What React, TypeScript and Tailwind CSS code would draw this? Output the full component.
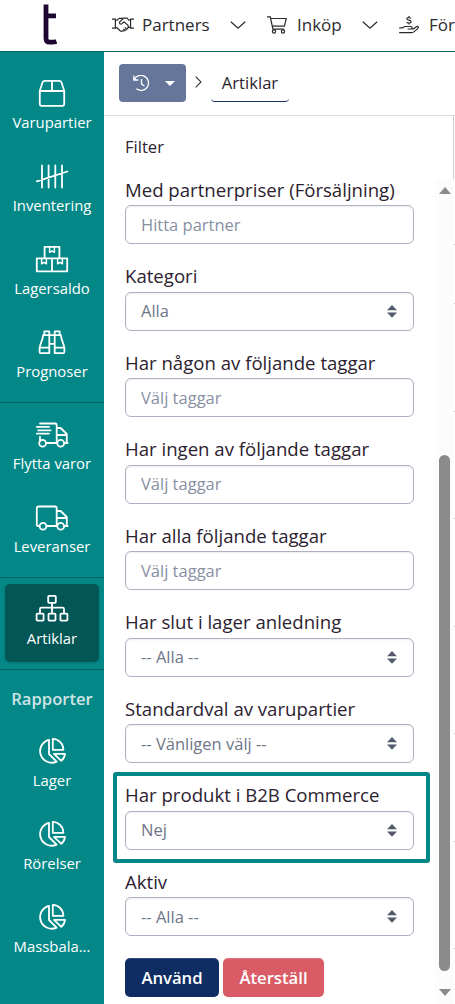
import type { ReactNode } from 'react';

interface SidebarItemProps {
  label: string;
  icon: ReactNode;
  active?: boolean;
}

interface FilterField {
  label: string;
  text: string;
  type: 'input' | 'select';
  highlighted?: boolean;
}

const FIELDS: FilterField[] = [
  { label: 'Med partnerpriser (Försäljning)', text: 'Hitta partner', type: 'input' },
  { label: 'Kategori', text: 'Alla', type: 'select' },
  { label: 'Har någon av följande taggar', text: 'Välj taggar', type: 'input' },
  { label: 'Har ingen av följande taggar', text: 'Välj taggar', type: 'input' },
  { label: 'Har alla följande taggar', text: 'Välj taggar', type: 'input' },
  { label: 'Har slut i lager anledning', text: '-- Alla --', type: 'select' },
  { label: 'Standardval av varupartier', text: '-- Vänligen välj --', type: 'select' },
  { label: 'Har produkt i B2B Commerce', text: 'Nej', type: 'select', highlighted: true },
  { label: 'Aktiv', text: '-- Alla --', type: 'select' },
];

function SideIcon({ children }: { children: ReactNode }) {
  return (
    <svg
      viewBox="0 0 32 32"
      className="h-8 w-8 overflow-visible"
      fill="none"
      stroke="currentColor"
      strokeWidth="1.8"
      strokeLinecap="round"
      strokeLinejoin="round"
    >
      {children}
    </svg>
  );
}

const BoxIcon = () => (
  <SideIcon>
    <path d="M3.8 13.8 6.6 5.2Q7.1 3.8 8.6 3.8H23.4Q24.9 3.8 25.4 5.2L28.2 13.8V27Q28.2 28.8 26.4 28.8H5.6Q3.8 28.8 3.8 27ZM3.8 14H28.2M16 3.8V14" />
  </SideIcon>
);

const TallyIcon = () => (
  <SideIcon>
    <path d="M6 5.5V27.5M12.6 5.5V27.5M19.3 5.5V27.5M26 5.5V27.5M.8 21.3 31.4 11.5" />
  </SideIcon>
);

const BoxesIcon = () => (
  <SideIcon>
    <path d="M8.6 15V3.8H23.4V15M.8 15.3H31.2V28.4H.8ZM16 15.3V28.4" />
    <path
      strokeWidth="1.5"
      d="M13.6 4V9.3L16 7.9 18.4 9.3V4M5.6 15.5V20.8L8 19.4 10.4 20.8V15.5M21.6 15.5V20.8L24 19.4 26.4 20.8V15.5"
    />
  </SideIcon>
);

const BinocularsIcon = () => (
  <SideIcon>
    <path d="M8.3 8.6V5.4H13.3V27.2H4.8Q3.6 27.2 3.6 26V22.5C3.9 17.5 6.9 14.5 7.1 9.2H24.9C25.1 14.5 28.1 17.5 28.4 22.5V26Q28.4 27.2 27.2 27.2H18.7V5.4H23.7V8.6M13.3 17.8H18.7M4 21.6H13.3M18.7 21.6H28" />
  </SideIcon>
);

const TruckFastIcon = () => (
  <SideIcon>
    <path d="M4 6.5H19.2Q20.7 6.5 20.7 8V26M.8 9.9H13M2.2 13.3H14.6M.8 16.6H13M4 19.8V24.2M10 26H21M20.7 11H24.6L30.8 17V26M20.7 18H30.6M28.4 26H31.6" />
    <circle cx="6.6" cy="26.3" r="3.4" />
    <circle cx="24.7" cy="26.3" r="3.4" />
  </SideIcon>
);

const TruckIcon = () => (
  <SideIcon>
    <path d="M3.4 26H2.4Q.8 26 .8 24.4V8.1Q.8 6.5 2.4 6.5H19.1Q20.7 6.5 20.7 8.1V26M10.5 26H21M20.7 11H24.6L30.8 17V26M20.7 18H30.6M28.4 26H31.6" />
    <circle cx="7" cy="26.3" r="3.4" />
    <circle cx="24.7" cy="26.3" r="3.4" />
  </SideIcon>
);

const SitemapIcon = () => (
  <SideIcon>
    <rect x="12.2" y="3.8" width="7.6" height="7" rx=".8" />
    <rect x=".6" y="21.6" width="7" height="7" rx=".8" />
    <rect x="12.5" y="21.6" width="7" height="7" rx=".8" />
    <rect x="24.4" y="21.6" width="7" height="7" rx=".8" />
    <path d="M16 11V21.4M4 21.4V17Q4 15.7 5.3 15.7H26.7Q28 15.7 28 17V21.4" />
  </SideIcon>
);

const PieIcon = () => (
  <SideIcon>
    <path d="M13 5.8A11.6 11.6 0 1 0 20.6 27.6L13 20ZM16.8 4.9V15.8H27.4A11 11 0 0 0 16.8 4.9ZM18 19.8H29A10.5 10.5 0 0 1 25.3 26.8Z" />
  </SideIcon>
);

function SidebarItem({ label, icon, active }: SidebarItemProps) {
  return (
    <a
      className={`mx-[5px] flex h-[78px] flex-col items-center rounded-[5px] pt-2 text-white ${
        active ? 'bg-[#035656] shadow-sm' : ''
      }`}
    >
      {icon}
      <span className="mt-1 text-[14.85px] leading-[21px] whitespace-nowrap">{label}</span>
    </a>
  );
}

function Divider({ className }: { className: string }) {
  return <div className={`h-px shrink-0 bg-[#036262] ${className}`} />;
}

function Sidebar() {
  return (
    <aside className="flex w-[104px] shrink-0 flex-col bg-[#038887] pt-[17px]">
      <div className="flex flex-col gap-[5px] [&_span]:mt-[3px]">
        <SidebarItem label="Varupartier" icon={<BoxIcon />} />
        <SidebarItem label="Inventering" icon={<TallyIcon />} />
        <SidebarItem label="Lagersaldo" icon={<BoxesIcon />} />
        <SidebarItem label="Prognoser" icon={<BinocularsIcon />} />
      </div>
      <Divider className="my-1.5" />
      <div className="flex flex-col gap-[5px]">
        <SidebarItem label="Flytta varor" icon={<TruckFastIcon />} />
        <SidebarItem label="Leveranser" icon={<TruckIcon />} />
      </div>
      <Divider className="mt-[7px] mb-1.5" />
      <SidebarItem label="Artiklar" icon={<SitemapIcon />} active />
      <Divider className="mt-[7px] mb-1.5" />
      <h2 className="mt-[11px] mb-[15px] text-center text-[16.6px] leading-6 font-semibold text-[#cfe3e4]">
        Rapporter
      </h2>
      <div className="flex flex-col gap-[5px]">
        <SidebarItem label="Lager" icon={<PieIcon />} />
        <SidebarItem label="Rörelser" icon={<PieIcon />} />
        <SidebarItem label="Massbala..." icon={<PieIcon />} />
      </div>
    </aside>
  );
}

function NavChevron({ className }: { className: string }) {
  return (
    <svg viewBox="0 0 16 8" className={`h-2 w-4 shrink-0 ${className}`} fill="none" stroke="currentColor" strokeWidth="1.2">
      <path d="M.8.7 8 7.2 15.2.7" />
    </svg>
  );
}

function TopBar() {
  return (
    <header className="flex h-[52px] shrink-0 items-center overflow-hidden border-b border-[#036262] bg-white pb-[2px] text-[17px] whitespace-nowrap text-[#2b2b2e]">
      <svg viewBox="0 0 14 41" className="ml-[43px] h-[41px] w-[14px] shrink-0" fill="none" stroke="#1c0732" strokeWidth="4.8">
        <path d="M3 .6V34.5Q3 38.2 6.6 38.2H9.5Q11.5 38.2 13.5 37.4M3 11.8H13" />
      </svg>
      <svg viewBox="0 0 22 16" className="ml-[55px] h-4 w-[22px] shrink-0" fill="none" stroke="currentColor" strokeWidth="1.2">
        <path d="M0 2.2H3.4V11.2H0M22 2.2H18.6V11.2H22M3.4 3.1H5.2L7.2 1.4H10L12 1.2H15L16.9 3.1H18.6M3.4 10.7H4.8L8.4 14Q9.3 14.7 10.2 13.9L10.5 13.7Q11.7 14.5 12.7 13.1 14 13.5 14.5 12 16 12 16 10.4H18.6M11.3 1.5 7.7 4.8Q7 6 8 6.7 9 7.4 10 6.6L12 4.8 16 8.4Q16.7 9.4 16 10.4M12.7 13.1 11.4 11.8M14.5 12 12.8 10.4" />
      </svg>
      <span className="ml-2 w-[68px]">Partners</span>
      <NavChevron className="ml-5" />
      <svg viewBox="0 0 20 18" className="ml-[21px] h-[18px] w-5 shrink-0" fill="none" stroke="currentColor" strokeWidth="1.2">
        <path d="M0 .8H3.3L5.9 13.2H17.3M3.7 2.5H19.2L17.4 10.1H5.3" />
        <circle cx="7" cy="15.5" r="1.6" />
        <circle cx="16" cy="15.5" r="1.6" />
      </svg>
      <span className="ml-[10px] w-[45px]">Inköp</span>
      <NavChevron className="ml-5" />
      <svg viewBox="0 0 20 18" className="ml-[21px] h-[18px] w-5 shrink-0" fill="none" stroke="currentColor" strokeWidth="1.2">
        <path d="M12.1 2.4Q11 1.5 9.5 1.5 7.8 1.6 7.8 2.8 7.8 3.8 9.9 4.2 12.1 4.6 12.1 5.7 12.1 7 10 7 8.6 7 7.6 6.2M10 0V1.5M10 7V8.6" />
        <path d="M.2 11.8H3.6L5.7 10.5H11.5Q13.2 10.5 13.2 11.8 13.2 13 11.8 13H8.6M13 12.8H14.6L17.4 10.7Q18.6 10 19.2 10.9 19.7 11.8 18.7 12.6L15.2 15.6Q14.1 16.6 12.6 16.6H.2" />
      </svg>
      <span className="ml-[10px]">För</span>
    </header>
  );
}

function Breadcrumb() {
  return (
    <div className="flex h-16 shrink-0 items-start border-b border-[#dcdcde] pt-3 pl-[15px]">
      <button className="flex h-[38px] w-[67px] items-center rounded-[4px] bg-[#65769a] pl-[14px] text-white">
        <svg viewBox="0 0 17 17" className="h-[17px] w-[17px]" fill="none" stroke="currentColor" strokeWidth="1.3">
          <path d="M.8.5V5H5.4M1.2 4.7A7.5 7.5 0 1 1 3.4 13.8M8.5 4V9L11.4 11" />
        </svg>
        <svg viewBox="0 0 10 5" className="ml-[15px] h-[5px] w-[10px]" fill="currentColor">
          <path d="M0 0H10L5 5Z" />
        </svg>
      </button>
      <svg viewBox="0 0 7 12" className="mt-[12px] ml-[9px] h-3 w-[7px]" fill="none" stroke="#333" strokeWidth="1.1">
        <path d="M.7.7 6 6 .7 11.3" />
      </svg>
      <span className="ml-[9px] flex h-[38px] w-[78px] items-center justify-center rounded-[4px] border-b border-[#1b3166] pt-[2px] text-[16.6px] text-[#2c2230]">
        Artiklar
      </span>
    </div>
  );
}

function Field({ label, text, type, highlighted }: FilterField) {
  return (
    <div className="relative mb-[18px] h-[68.5px] w-[289px]">
      <label className="block text-[18.6px] leading-[25px] whitespace-nowrap text-[#2c2230]">{label}</label>
      <div className="mt-[3.8px] flex h-[39px] items-center justify-between rounded-[6px] border border-[#adb1c2] bg-white pr-4 pl-[15px] text-[16.5px] shadow-[inset_0_1px_2px_rgba(0,0,0,0.07)]">
        <span className={type === 'select' ? 'pt-px text-[#6e7687]' : 'pt-px text-[#8890a2]'}>{text}</span>
        {type === 'select' && (
          <svg viewBox="0 0 10 13" className="h-[13px] w-[10px]" fill="#535b6b">
            <path d="M0 5.3 5 0 10 5.3ZM0 7.5H10L5 12.8Z" />
          </svg>
        )}
      </div>
      {highlighted && (
        <div className="absolute -top-[10px] -left-[12px] h-[91px] w-[317px] rounded-[3px] border-4 border-[#038887]" />
      )}
    </div>
  );
}

function ScrollBar() {
  return (
    <div className="flex w-[19px] flex-col items-center bg-[#fcfcfc] pt-2 pb-2">
      <svg viewBox="0 0 12 7" className="h-[7px] w-3" fill="#8b8b8b">
        <path d="M0 7 6 0 12 7Z" />
      </svg>
      <div className="mt-[261px] h-[516px] w-[11px] rounded-full bg-[#8b8b8b]" />
      <svg viewBox="0 0 12 7" className="mt-auto h-[7px] w-3" fill="#8b8b8b">
        <path d="M0 0H12L6 7Z" />
      </svg>
    </div>
  );
}

// Row borders of the article table peeking out behind the filter panel
function TableEdge() {
  return (
    <div className="flex w-px flex-col pt-[65px]">
      <i className="h-px bg-[#cfcfd2]" />
      <div className="mt-[58px] flex flex-col gap-[106.5px]">
        {[0, 1, 2, 3, 4, 5, 6].map((row) => (
          <i key={row} className="h-px bg-[#cfcfd2]" />
        ))}
      </div>
    </div>
  );
}

export default function App() {
  return (
    <div className="flex h-[1004px] w-[455px] flex-col overflow-hidden bg-white font-['Open_Sans',sans-serif]">
      <TopBar />
      <div className="flex min-h-0 flex-1">
        <Sidebar />
        <main className="flex min-w-0 flex-1 flex-col">
          <Breadcrumb />
          <div className="mr-px flex h-[63px] shrink-0 items-center border-r border-[#cfcfd2] pb-px pl-[21px] text-[16.6px] text-[#2c2230]">
            Filter
          </div>
          <div className="flex min-h-0 flex-1">
            <form className="w-[331px] shrink-0 pl-[21px]">
              <div className="-mt-[2.5px]">
                {FIELDS.map((field) => (
                  <Field key={field.label} {...field} />
                ))}
              </div>
              <div className="mt-[21px] flex gap-1 text-[16.7px] font-semibold text-white">
                <button
                  type="button"
                  className="h-[39px] w-[94px] rounded-[5px] bg-[#0f2d62] shadow-[inset_0_1px_0_rgba(255,255,255,0.15)]"
                >
                  Använd
                </button>
                <button
                  type="button"
                  className="h-[39px] w-[101px] rounded-[5px] bg-[#d95b66] shadow-[inset_0_1px_0_rgba(255,255,255,0.15)]"
                >
                  Återställ
                </button>
              </div>
            </form>
            <ScrollBar />
            <TableEdge />
          </div>
        </main>
      </div>
    </div>
  );
}
